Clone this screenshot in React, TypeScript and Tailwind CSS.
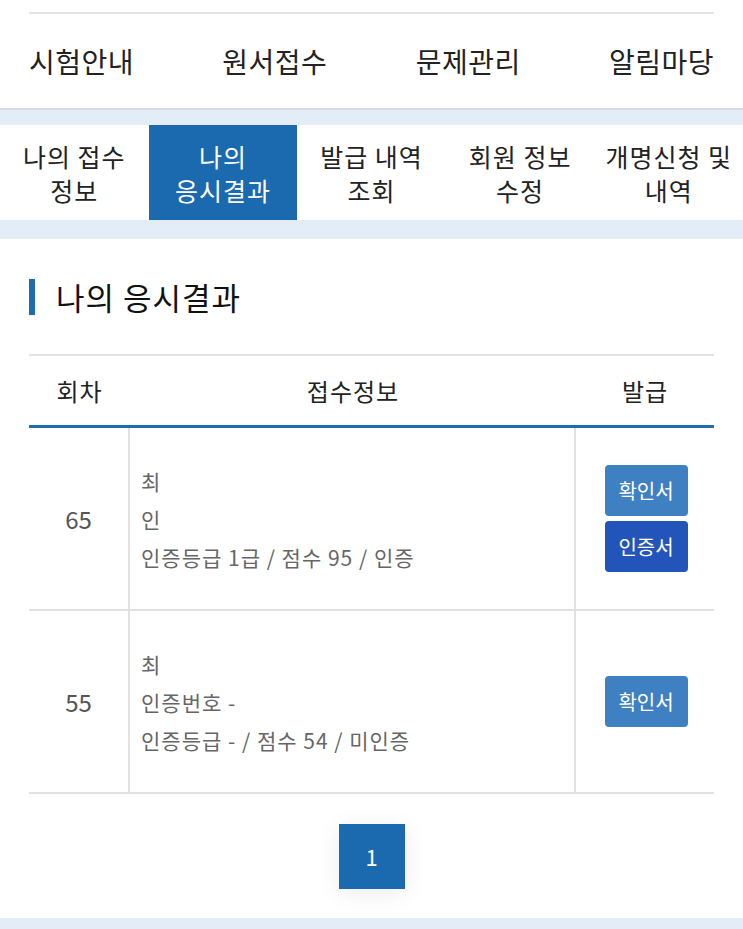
const menus = ["시험안내", "원서접수", "문제관리", "알림마당"];

const tabs = [
  { label: ["나의 접수", "정보"], active: false },
  { label: ["나의", "응시결과"], active: true },
  { label: ["발급 내역", "조회"], active: false },
  { label: ["회원 정보", "수정"], active: false },
  { label: ["개명신청 및", "내역"], active: false },
];

const results = [
  {
    round: "65",
    lines: ["최", "인", "인증등급 1급 / 점수 95 / 인증"],
    cert: true,
  },
  {
    round: "55",
    lines: ["최", "인증번호 -", "인증등급 - / 점수 54 / 미인증"],
    cert: false,
  },
];

export default function App() {
  return (
    <div
      className="w-[743px] min-h-[929px] bg-white pt-3 text-[#222]"
      style={{ fontFamily: '"Noto Sans CJK KR", "Noto Sans", sans-serif' }}
    >
      <nav className="mx-[29px] flex h-[96px] items-center justify-between border-t-2 border-[#e2e4e7] text-[28px] tracking-[0.5px]">
        {menus.map((m) => (
          <span key={m}>{m}</span>
        ))}
      </nav>
      <div className="h-[2px] bg-[#d6dbe1]" />
      <div className="h-[15px] bg-[#e3edf8]" />

      <div className="grid h-[95px] grid-cols-5 bg-white">
        {tabs.map((t) => (
          <div
            key={t.label.join(" ")}
            className={
              t.active
                ? "flex flex-col items-center justify-center bg-[#1b69ae] text-[25px] leading-[34px] tracking-[1px] text-white"
                : "flex flex-col items-center justify-center text-[25px] leading-[34px] tracking-[1px] text-[#222]"
            }
          >
            <span className="whitespace-nowrap">{t.label[0]}</span>
            <span className="whitespace-nowrap">{t.label[1]}</span>
          </div>
        ))}
      </div>
      <div className="h-[19px] bg-[#e3edf8]" />

      <section className="px-[29px]">
        <div className="mt-[40px] flex h-[36px] items-center gap-[21px]">
          <span className="h-[36px] w-[6px] bg-[#1d6cb0]" />
          <h1 className="text-[31px] tracking-[1px] text-[#111]">나의 응시결과</h1>
        </div>

        <div className="mt-[39px] border-t-2 border-[#e1e1e1]">
          <div className="grid h-[72px] grid-cols-[101px_446px_138px] items-center border-b-[3px] border-[#1f6cb0] text-[24px] tracking-[1px] text-[#222]">
            <span className="text-center">회차</span>
            <span className="text-center">접수정보</span>
            <span className="text-center">발급</span>
          </div>

          {results.map((r) => (
            <div
              key={r.round}
              className="grid h-[183px] grid-cols-[101px_446px_138px] border-b-2 border-[#e1e1e1]"
            >
              <div className="flex items-center justify-center border-r-2 border-[#e1e1e1] text-[24px] text-[#555]">
                {r.round}
              </div>
              <div className="flex flex-col justify-center border-r-2 border-[#e1e1e1] pl-[11px] text-[21px] leading-[38px] tracking-[1px] text-[#666]">
                {r.lines.map((l, i) => (
                  <span key={i}>{l}</span>
                ))}
              </div>
              <div className="flex flex-col items-center justify-center gap-[5px] pl-[2px]">
                <button className="h-[51px] w-[83px] rounded-[4px] bg-[#3f80c3] text-[20px] text-white">
                  확인서
                </button>
                {r.cert && (
                  <button className="h-[51px] w-[83px] rounded-[4px] bg-[#2354b9] text-[20px] text-white">
                    인증서
                  </button>
                )}
              </div>
            </div>
          ))}
        </div>

        <div className="flex justify-center pb-[29px] pt-[30px]">
          <span className="flex h-[65px] w-[66px] items-center justify-center bg-[#1b69ae] text-[22px] text-white shadow-[0_4px_24px_rgba(0,0,0,0.08)]">
            1
          </span>
        </div>
      </section>
      <div className="h-[11px] bg-[#e3edf8]" />
    </div>
  );
}
